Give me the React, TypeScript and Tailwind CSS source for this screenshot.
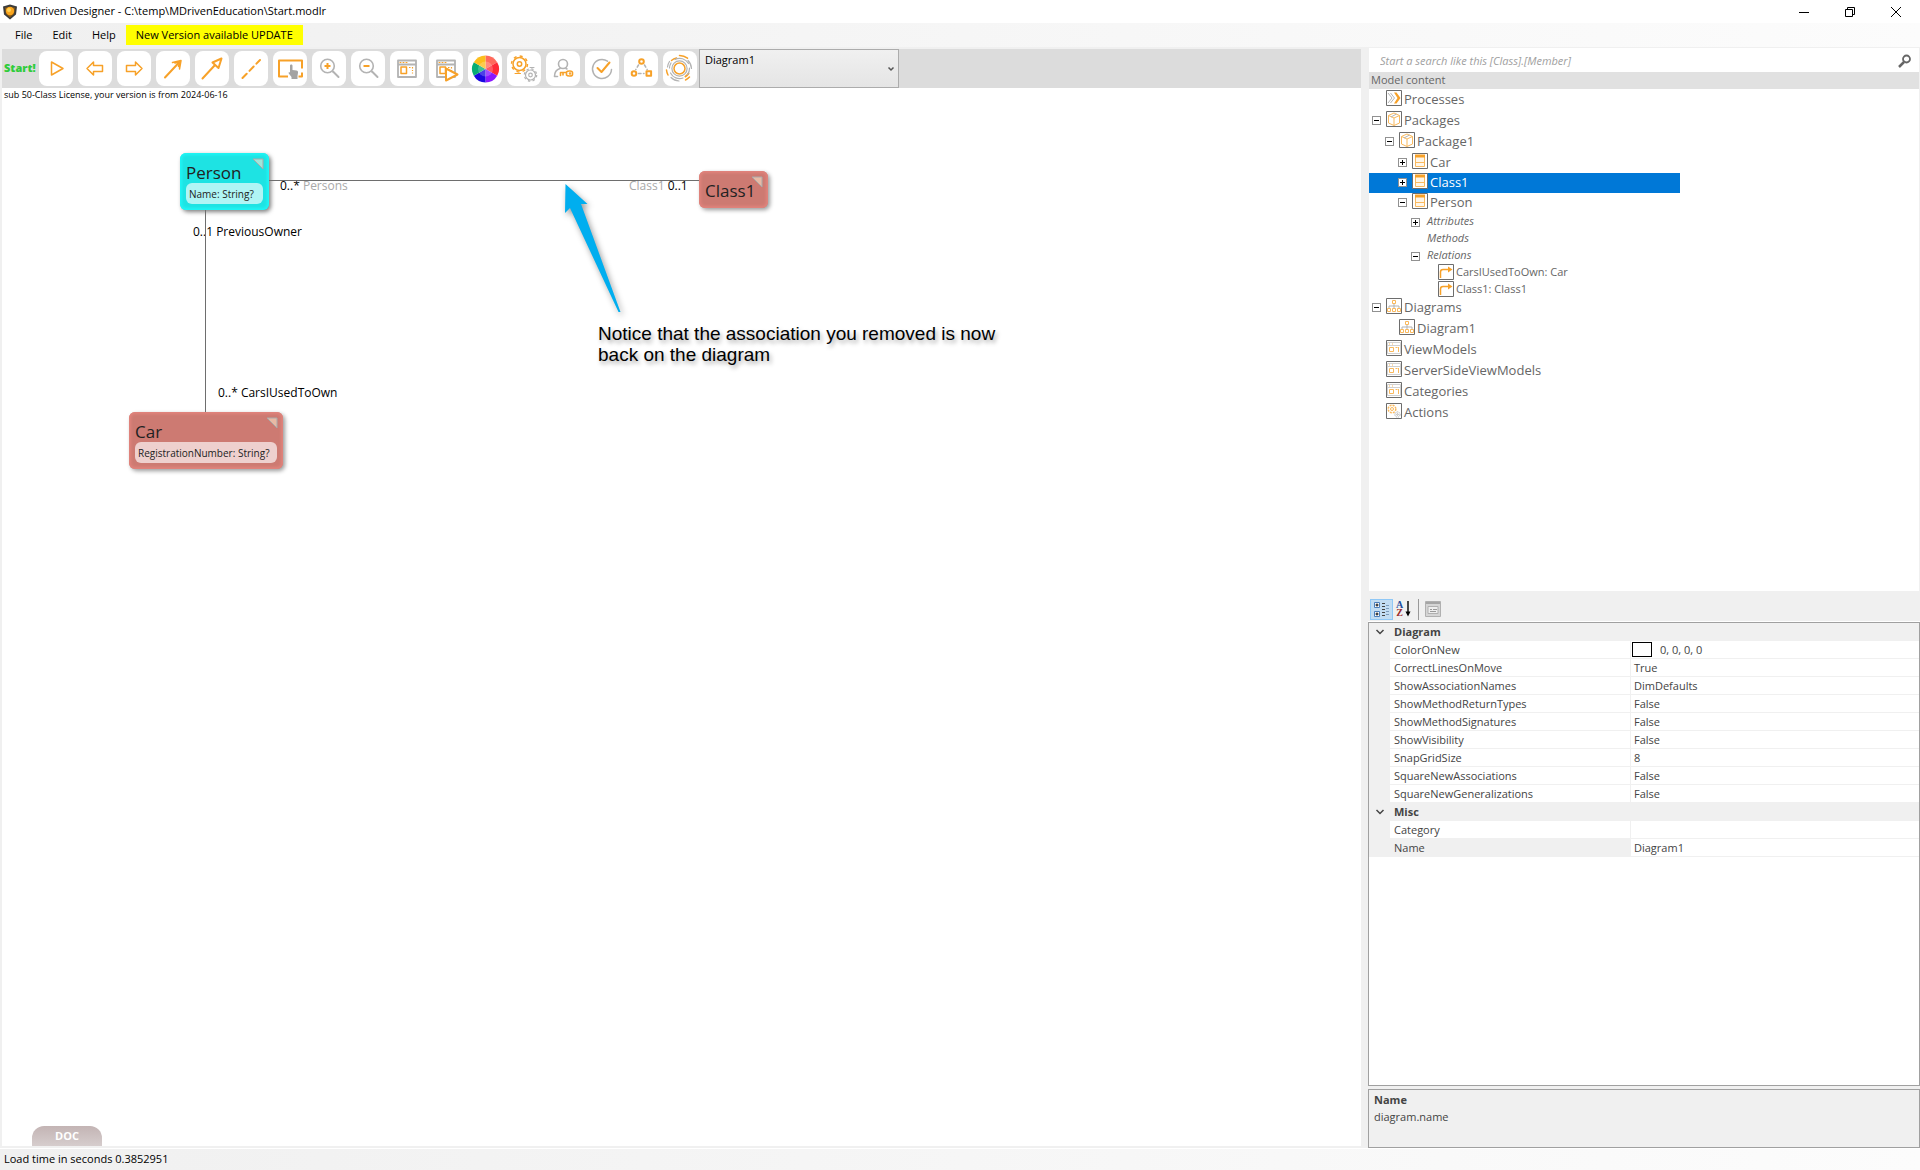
import type { ReactNode } from "react";
import clsx from "clsx";

const ORANGE = "#f7a128";
const GRAY = "#b3b3b3";

export default function App() {
  return (
    <div className="flex h-screen w-full flex-col overflow-hidden bg-white font-['Open_Sans',sans-serif] text-xs text-black">
      <TitleBar />
      <MenuBar />
      <div className="flex min-h-0 flex-1 gap-2 border-b border-white bg-[#f0f0f0] pt-px pr-px pl-0.5">
        <main className="flex min-w-0 flex-1 flex-col pt-px pb-0.5">
          <Toolbar />
          <DiagramCanvas />
        </main>
        <aside className="flex w-[550px] flex-none flex-col">
          <SearchBox />
          <ModelTree />
          <PropertyPanel />
        </aside>
      </div>
      <footer className="flex h-[21px] flex-none items-center bg-linear-to-r from-[#f0f0f0] to-[#fcfcfc] px-1 text-[11px]">
        Load time in seconds 0.3852951
      </footer>
    </div>
  );
}

function TitleBar() {
  return (
    <header className="flex h-[23px] flex-none items-center justify-between pr-[17px] pl-0.5">
      <div className="flex items-center gap-[5px] text-[11px]">
        <svg viewBox="0 0 16 16" className="h-4 w-4" aria-hidden>
          <path d="M1 2.5 8 .5l7 2-1 8L8 15.5 2 10.5Z" fill="#3b3b3b" />
          <path d="M3 3.5h10l-1 6.5-4 3.5-4-3.5Z" fill="#8a5a14" />
          <circle cx="8" cy="7" r="4.2" fill="#f9a51e" />
          <circle cx="7" cy="6" r="2" fill="#ffd257" />
        </svg>
        <h1>MDriven Designer - C:\temp\MDrivenEducation\Start.modlr</h1>
      </div>
      <div className="flex gap-8">
        <WindowButton label="Minimize">
          <path d="M1 7.5h10" />
        </WindowButton>
        <WindowButton label="Restore">
          <path d="M1.5 4.5h7v7h-7zM3.5 4.5v-2h7v7h-2" />
        </WindowButton>
        <WindowButton label="Close">
          <path d="m1 2 10 10M11 2 1 12" />
        </WindowButton>
      </div>
    </header>
  );
}

function WindowButton({ label, children }: { label: string; children: ReactNode }) {
  return (
    <button aria-label={label} className="flex w-3.5 items-center justify-center">
      <svg viewBox="0 0 12 14" className="h-3.5 w-3" fill="none" stroke="#000">
        {children}
      </svg>
    </button>
  );
}

function MenuBar() {
  return (
    <nav className="flex h-6 flex-none items-center bg-linear-to-r from-[#f0f0f0] to-[#fcfcfc] pl-[5px] text-[11px]">
      <button className="px-2.5">File</button>
      <button className="px-2.5">Edit</button>
      <button className="px-2.5">Help</button>
      <button className="h-5 bg-[#ffff00] px-2.5">New Version available UPDATE</button>
    </nav>
  );
}

/* ---------- toolbar ---------- */

const tools: { label: string; icon: ReactNode }[] = [
  { label: "Run", icon: <path d="M12.5 11v13l11.5-6.5Z" /> },
  { label: "Back", icon: <path d="m9 17.5 6.5-6.5v3.5h9v6h-9V24Z" /> },
  { label: "Forward", icon: <path d="m25 17.5-6.5-6.5v3.5h-9v6h9V24Z" /> },
  {
    label: "Association",
    icon: (
      <>
        <path d="M9 26.5 23 11.5" strokeWidth={2} />
        <path d="m16.5 11.5 8.500-2-1.500 8.500M19 12l4.500-1-1 4.500" />
      </>
    ),
  },
  {
    label: "Generalization",
    icon: <path d="M7.5 27.5 20 14M26.5 7.5l-9 4 6 5.500Z" strokeWidth={2} />,
  },
  { label: "Dependency", icon: <path d="M8.5 27 26 9" strokeWidth={2} strokeDasharray="6 4" /> },
  {
    label: "Select area",
    icon: (
      <>
        <path d="M15 25.500H6v-16h23v8" strokeWidth={2} strokeLinecap="butt" />
        <path d="M25.500 25.500H29v-4" strokeWidth={2} strokeLinecap="butt" />
        <path
          d="M17 14.500c0-1.500 2.500-1.500 2.500 0V19l4 .5c1.200.2 1.700 1 1.500 2.200L24.500 25v3h-6v-2l-2.700-3.500c-.6-1 .3-1.700 1.200-1Z"
          fill="#a3a3a3"
          stroke="none"
        />
      </>
    ),
  },
  { label: "Zoom in", icon: <Magnifier plus /> },
  { label: "Zoom out", icon: <Magnifier /> },
  { label: "View models", icon: <FormWindow /> },
  {
    label: "Run view model",
    icon: (
      <>
        <FormWindow />
        <path d="M17 17.5v12l11.500-6Z" fill="#fff" strokeWidth={2} />
      </>
    ),
  },
  { label: "Colors", icon: <ColorWheel /> },
  {
    label: "Settings",
    icon: (
      <>
        <circle cx="12.5" cy="13" r="6.5" />
        <circle cx="12.5" cy="13" r="8" strokeWidth={1.4} strokeDasharray="3 3.28" strokeLinecap="butt" />
        <circle cx="12.5" cy="13" r="2.2" />
        <path d="M8 22.5h5.500" strokeWidth={1} />
        <g stroke={GRAY} strokeWidth={1.2}>
          <circle cx="23.5" cy="24" r="5" />
          <circle cx="23.5" cy="24" r="6.2" strokeDasharray="2.4 2.47" strokeLinecap="butt" />
          <circle cx="23.5" cy="24" r="1.8" />
          <path d="M23 16.5h4" strokeWidth={1} />
        </g>
      </>
    ),
  },
  {
    label: "Access rights",
    icon: (
      <>
        <g stroke={GRAY} strokeWidth={1.6}>
          <circle cx="17" cy="13" r="4.5" />
          <path d="M14 17.5c-3.500 1-5.500 3.500-5.500 8h3M20 17.5l1 .5" />
        </g>
        <path d="M20.5 21.5h-6v3M17 22v2M20.5 21c1-1.500 6-1.500 6 .5v2c0 2-5 2-6 .5Z" strokeWidth={1.6} />
        <circle cx="24" cy="22.5" r=".5" />
      </>
    ),
  },
  {
    label: "Validate",
    icon: (
      <>
        <path d="M22.5 10.200A9.500 9.500 0 1 0 26.500 18.500" stroke={GRAY} />
        <path d="m12.5 17 4 4 8-9.500" strokeWidth={2} />
      </>
    ),
  },
  {
    label: "Auto layout",
    icon: (
      <>
        <g strokeWidth={2}>
          <circle cx="17.5" cy="10.5" r="2.3" />
          <circle cx="10" cy="22.5" r="2.3" />
          <path d="M22.5 20.200h4.600v4.600h-4.600Z" />
        </g>
        <path d="m14.5 14-2.700 4.500M20.5 14l2.700 4.500M14.5 22.500H20" stroke={GRAY} strokeDasharray="2.5 2.5" />
      </>
    ),
  },
  {
    label: "Rings",
    icon: (
      <>
        <circle cx="16.5" cy="17.5" r="5.5" />
        <path d="M16.5 4.500a13 13 0 0 1 8 2.700M5 24a13 13 0 0 1-1.500-5M26.500 26a13 13 0 0 1-4 3M8.500 9.500a11 11 0 0 1 5-2.500" />
        <path d="M25.5 22.500a10.500 10.500 0 0 1-3 3" strokeWidth={2} />
        <g stroke={GRAY} strokeWidth={1.2}>
          <circle cx="16.5" cy="17.5" r="7.6" />
          <path d="M12 8.500a10 10 0 0 1 13.500 4M26.500 17a10 10 0 0 1-2 6.500M20 27a10 10 0 0 1-12.500-5M6.500 17a10 10 0 0 1 1.500-5M25 9.500a12 12 0 0 1 3.500 8M16 30a12 12 0 0 1-8-3.500M4.500 16a12 12 0 0 1 2-5.500" />
        </g>
      </>
    ),
  },
];

function Magnifier({ plus }: { plus?: boolean }) {
  return (
    <>
      <circle cx="15.5" cy="15" r="6.8" stroke={GRAY} strokeWidth={1.6} />
      <path d="m21 20.500 5.500 5.500" stroke={GRAY} strokeWidth={2} />
      <path d={plus ? "M12.5 15h6M15.5 12v6" : "M12.5 15h6"} strokeWidth={2} strokeLinecap="butt" />
    </>
  );
}

function FormWindow() {
  return (
    <>
      <path d="M8 9.500h18V26H8ZM8 13.500h18" stroke={GRAY} strokeWidth={1.8} />
      <path d="M10 11.500h1M13 11.500h1M16 11.500h1" strokeWidth={1} />
      <path d="M11 16h5.500v6.500H11Z" />
      <path d="M19 16.500h1.500M22.500 16v1.500M22.500 19v1M22.500 21.500v1" strokeWidth={1.2} strokeLinecap="butt" />
    </>
  );
}

function ColorWheel() {
  return (
    <g stroke="none">
      <path d="M17.5 18V4.500a13.500 13.500 0 0 1 11.700 6.750Z" fill="#ff6a5c" />
      <path d="m17.5 18 11.700-6.750a13.500 13.500 0 0 1 0 13.500Z" fill="#ff2b36" />
      <path d="m17.5 18 11.700 6.750a13.500 13.500 0 0 1-11.700 6.750Z" fill="#8a17ff" />
      <path d="M17.5 18v13.500a13.500 13.500 0 0 1-11.700-6.750Z" fill="#1a08e0" />
      <path d="m17.5 18-11.700 6.750a13.500 13.500 0 0 1 0-13.500Z" fill="#07ad74" />
      <path d="M17.5 18 5.800 11.250A13.500 13.500 0 0 1 17.500 4.500Z" fill="#fcbe1c" />
      <circle cx="17.5" cy="18" r="7.5" fill="#fff" fillOpacity=".22" />
    </g>
  );
}

function Toolbar() {
  return (
    <div className="flex h-[39px] flex-none items-center bg-[#dcdcdc]">
      <button className="w-[37px] flex-none pl-0.5 text-left text-[11px] font-extrabold text-[#2fcc3a]">Start!</button>
      <div className="flex gap-[5px]">
        {tools.map((tool) => (
          <button key={tool.label} aria-label={tool.label} className="h-[35px] w-[34px] flex-none rounded-lg bg-white">
            <svg
              viewBox="0 0 34 35"
              className="h-[35px] w-[34px]"
              fill="none"
              stroke={ORANGE}
              strokeWidth={1.5}
              strokeLinecap="round"
              strokeLinejoin="round"
            >
              {tool.icon}
            </svg>
          </button>
        ))}
      </div>
      <div className="relative ml-0.5 h-full w-[200px]">
        <select
          aria-label="Diagram"
          className="h-full w-full appearance-none border border-[#acacac] bg-linear-to-b from-[#f0f0f0] to-[#e5e5e5] px-[5px] pb-4 text-[11px]"
        >
          <option>Diagram1</option>
        </select>
        <svg
          viewBox="0 0 8 8"
          className="pointer-events-none absolute top-4 right-1 h-2 w-2"
          fill="none"
          stroke="#555"
          strokeWidth={1.5}
        >
          <path d="m1.5 2.500 2.500 2.500 2.500-2.500" />
        </svg>
      </div>
    </div>
  );
}

/* ---------- diagram ---------- */

function DiagramCanvas() {
  return (
    <section className="relative min-h-0 flex-1 overflow-hidden bg-white">
      <p className="px-0.5 text-[9px] leading-[14px]">sub 50-Class License, your version is from 2024-06-16</p>

      <ClassNode name="Person" attribute="Name: String?" color="cyan" className="top-[65px] left-[178px] h-[57px] w-[89px]" />
      <ClassNode name="Class1" color="red" className="top-[83px] left-[697px] h-[37px] w-[69px]" />
      <ClassNode
        name="Car"
        attribute="RegistrationNumber: String?"
        color="red"
        className="top-[324px] left-[127px] h-[57px] w-[154px]"
      />

      <RoleLabel className="top-[90px] left-[278px]">
        0..* <span className="text-[#a9a9a9]">Persons</span>
      </RoleLabel>
      <RoleLabel className="top-[90px] left-[627px]">
        <span className="text-[#a9a9a9]">Class1</span> 0..1
      </RoleLabel>
      <RoleLabel className="top-[136px] left-[191px]">0..1 PreviousOwner</RoleLabel>
      <RoleLabel className="top-[297px] left-[216px]">0..* CarsIUsedToOwn</RoleLabel>

      {/* association lines and the callout arrow */}
      <svg viewBox="0 0 800 400" className="pointer-events-none absolute top-0 left-0 h-[400px] w-[800px]" fill="none">
        <path d="M267 92.500h430M203.500 122v202" stroke="#6e6e6e" />
        <path
          d="m563.5 96 22 20H579L618.500 224h-2L568 120l-5 5Z"
          fill="#00aeef"
          className="drop-shadow-[2px_3px_3px_rgba(0,0,0,0.4)]"
        />
      </svg>
      <p className="absolute top-[235px] left-[596px] w-[420px] font-['Liberation_Sans',sans-serif] text-[19px] leading-[21px] text-shadow-[2px_3px_4px_rgba(0,0,0,0.35)]">
        Notice that the association you removed is now back on the diagram
      </p>

      <button className="absolute bottom-0 left-[30px] h-5 w-[70px] rounded-t-xl bg-linear-to-b from-[#c3b4b4] to-[#d6cdcd] text-[11px] font-bold text-white">
        DOC
      </button>
    </section>
  );
}

function RoleLabel({ className, children }: { className: string; children: ReactNode }) {
  return <span className={clsx("absolute leading-4 whitespace-nowrap", className)}>{children}</span>;
}

type ClassNodeProps = { name: string; attribute?: string; color: "cyan" | "red"; className: string };

function ClassNode({ name, attribute, color, className }: ClassNodeProps) {
  return (
    <div
      className={clsx(
        "absolute flex flex-col rounded-md px-1.5 pt-[9px]",
        color === "cyan"
          ? "bg-[#1ee3e3] shadow-[inset_0_0_3px_2px_#1ff6f6,2px_2px_4px_rgba(0,0,0,0.5)]"
          : "bg-[#cd7a72] shadow-[inset_0_0_3px_2px_#e2847c,2px_2px_4px_rgba(0,0,0,0.4)]",
        className,
      )}
    >
      <h2 className="text-[17px] leading-[21px] text-[#222]">{name}</h2>
      {attribute && (
        <p className="h-[21px] rounded-md bg-white/65 px-[3px] text-[10px] leading-[22px] whitespace-nowrap text-[#222]">
          {attribute}
        </p>
      )}
      <svg viewBox="0 0 12 12" className="absolute top-[5px] right-[5px] h-3 w-3" aria-hidden>
        <path d="M1 1h10v10Z" fill={color === "cyan" ? "#9fe6da" : "#e8b9a4"} stroke="#a9a9a9" />
      </svg>
    </div>
  );
}

/* ---------- model tree ---------- */

function SearchBox() {
  return (
    <label className="flex h-6 flex-none items-center bg-white pt-0.5 pr-[7px] pl-[11px]">
      <input
        aria-label="Search"
        placeholder="Start a search like this [Class].[Member]"
        className="min-w-0 flex-1 text-[11px] italic outline-none placeholder:text-[#a0a0a0]"
      />
      <svg viewBox="0 0 14 14" className="h-3.5 w-3.5" fill="none" stroke="#666">
        <circle cx="8.5" cy="5" r="3.5" strokeWidth={1.8} />
        <path d="m6 8-5 5" strokeWidth={2.5} />
      </svg>
    </label>
  );
}

type TreeIconName = "process" | "package" | "class" | "relation" | "diagram" | "form" | "gears";

type TreeRow = { text: string; level: number; icon?: TreeIconName; open?: boolean; selected?: boolean };

const treeRows: TreeRow[] = [
  { text: "Processes", level: 0, icon: "process" },
  { text: "Packages", level: 0, icon: "package", open: true },
  { text: "Package1", level: 1, icon: "package", open: true },
  { text: "Car", level: 2, icon: "class", open: false },
  { text: "Class1", level: 2, icon: "class", open: false, selected: true },
  { text: "Person", level: 2, icon: "class", open: true },
  { text: "Attributes", level: 3, open: false },
  { text: "Methods", level: 3 },
  { text: "Relations", level: 3, open: true },
  { text: "CarsIUsedToOwn: Car", level: 4, icon: "relation" },
  { text: "Class1: Class1", level: 4, icon: "relation" },
  { text: "Diagrams", level: 0, icon: "diagram", open: true },
  { text: "Diagram1", level: 1, icon: "diagram" },
  { text: "ViewModels", level: 0, icon: "form" },
  { text: "ServerSideViewModels", level: 0, icon: "form" },
  { text: "Categories", level: 0, icon: "form" },
  { text: "Actions", level: 0, icon: "gears" },
];

const rowStyles = [
  "h-[21px] pl-[3px] text-[13px] leading-[18px]",
  "h-[21px] pl-4 text-[13px] leading-[18px]",
  "h-5 pl-[29px] text-[13px] leading-[18px]",
  "h-[17px] pl-[42px] text-[11px] leading-4 italic",
  "h-[17px] pl-[55px] text-[11px] leading-4",
];

function ModelTree() {
  return (
    <section className="flex min-h-0 flex-1 flex-col bg-white text-[#666]">
      <h2 className="h-[17px] flex-none bg-[#e1e1e1] px-0.5 text-[11px] leading-4">Model content</h2>
      <ul className="w-[311px] pt-px">
        {treeRows.map((row, i) => (
          <li key={i} className={clsx("flex items-start", rowStyles[row.level], row.selected && "bg-[#0078d7] text-white")}>
            <Expander open={row.open} />
            {row.icon ? <TreeIcon name={row.icon} /> : <span className="w-[7px]" />}
            <span>{row.text}</span>
          </li>
        ))}
      </ul>
    </section>
  );
}

function Expander({ open }: { open?: boolean }) {
  if (open === undefined) return <span className="w-[9px] flex-none" />;
  return (
    <button aria-label={open ? "Collapse" : "Expand"} className="mt-[5px] h-[9px] w-[9px] flex-none">
      <svg viewBox="0 0 9 9" className="h-[9px] w-[9px]" fill="none" shapeRendering="crispEdges">
        <path d="M.5.5h8v8h-8Z" fill="#fff" stroke="#919191" />
        <path d={open ? "M2 4.500h5" : "M2 4.500h5M4.500 2v5"} stroke="#000" />
      </svg>
    </button>
  );
}

const treeIcons: Record<TreeIconName, ReactNode> = {
  process: (
    <>
      <path d="m2 3 4 5-4 5M4.500 3l4 5-4 5" stroke={GRAY} />
      <path d="M8 2.500h2.500L14.500 8l-4 5.500H8L11.500 8Z" fill={ORANGE} stroke="none" />
    </>
  ),
  package: (
    <>
      <path d="m8 14.500-5.500-2.500V4.500L8 2l5.500 2.500V12ZM2.500 4.500 8 7l5.500-2.500M8 7v7.500" stroke="#f9b95e" />
      <path d="m5 6 5.500-3" stroke={GRAY} />
    </>
  ),
  class: (
    <>
      <path d="M3.500 3v10.500h9V3" fill="#fff6e8" stroke="#f9b95e" />
      <path d="M3 1.500h10v3H3Z" fill={ORANGE} stroke="none" />
      <path d="M3 9.500h10" stroke="#f9b95e" />
    </>
  ),
  relation: (
    <>
      <path d="M2.500 14V8q0-2.500 2.500-2.500h6" strokeWidth={1.5} />
      <path d="m10 2.500 4.500 3-4.500 3Z" fill={ORANGE} stroke="none" />
    </>
  ),
  diagram: (
    <>
      <path d="M6.500 2.500h3v3h-3ZM1.500 10.500h3v3h-3ZM6.500 10.500h3v3h-3ZM11.500 10.500h3v3h-3Z" stroke="#f9b95e" />
      <path d="M8 6v4M3 10V8h10v2" stroke={GRAY} />
    </>
  ),
  form: (
    <>
      <path d="M1.500 2.500h13v11h-13ZM2 5.500h12" stroke="#d0d0d0" />
      <path d="M3.500 7.500h4v4h-4ZM9.500 7.500h2M12.500 7v5M3 4h1M6 4h1" stroke="#f9b95e" />
    </>
  ),
  gears: (
    <>
      <circle cx="6" cy="6" r="3.8" stroke="#f9b95e" strokeDasharray="2 1" strokeWidth={1.5} />
      <circle cx="6" cy="6" r="1.5" stroke="#f9b95e" />
      <circle cx="11.5" cy="11.5" r="2.6" stroke={GRAY} strokeDasharray="1.5 .7" />
      <circle cx="11.5" cy="11.5" r=".8" stroke={GRAY} />
    </>
  ),
};

function TreeIcon({ name }: { name: TreeIconName }) {
  return (
    <svg viewBox="0 0 16 16" className="mr-0.5 ml-[5px] h-4 w-4 flex-none" fill="none" stroke={ORANGE}>
      <path d="M.5.5h15v15H.5Z" fill="#fff" stroke="#6d6d6d" />
      {treeIcons[name]}
    </svg>
  );
}

/* ---------- property grid ---------- */

const propertyGroups = [
  {
    name: "Diagram",
    rows: [
      ["ColorOnNew", "0, 0, 0, 0"],
      ["CorrectLinesOnMove", "True"],
      ["ShowAssociationNames", "DimDefaults"],
      ["ShowMethodReturnTypes", "False"],
      ["ShowMethodSignatures", "False"],
      ["ShowVisibility", "False"],
      ["SnapGridSize", "8"],
      ["SquareNewAssociations", "False"],
      ["SquareNewGeneralizations", "False"],
    ],
  },
  {
    name: "Misc",
    rows: [
      ["Category", ""],
      ["Name", "Diagram1"],
    ],
  },
];

function PropertyPanel() {
  return (
    <section className="-mr-px -ml-px flex h-[557px] flex-none flex-col text-[11px] text-[#444]">
      <PropertyToolbar />
      <div className="min-h-0 flex-1 border border-[#a0a0a0] bg-white">
        <table className="w-full table-fixed border-separate border-spacing-0">
          <colgroup>
            <col className="w-[21px]" />
            <col className="w-[241px]" />
            <col />
          </colgroup>
          {propertyGroups.map((group) => (
            <tbody key={group.name}>
              <tr className="h-[18px] bg-[#f0f0f0]">
                <td className="p-0">
                  <button aria-label={"Collapse " + group.name} className="flex h-[18px] w-full items-center justify-center">
                    <svg viewBox="0 0 10 10" className="h-2.5 w-2.5" fill="none" stroke="#444" strokeWidth={1.5}>
                      <path d="m1.5 3 3.500 3.500L8.500 3" />
                    </svg>
                  </button>
                </td>
                <th colSpan={2} className="p-0 pl-1 text-left leading-[18px] font-bold">
                  {group.name}
                </th>
              </tr>
              {group.rows.map(([name, value]) => (
                <tr key={name} className="h-[18px]">
                  <td className="bg-[#f0f0f0] p-0" />
                  <th
                    className={clsx(
                      "border-r border-b border-[#f0f0f0] p-0 pl-1 text-left leading-[17px] font-normal",
                      name === "Name" && "bg-[#f0f0f0]",
                    )}
                  >
                    {name}
                  </th>
                  <td className="border-b border-[#f0f0f0] p-0 pl-[3px] leading-[17px]">
                    {name === "ColorOnNew" ? (
                      <span className="-ml-0.5 flex items-center gap-2">
                        <span className="h-[15px] w-5 border border-black bg-white" />
                        {value}
                      </span>
                    ) : (
                      value
                    )}
                  </td>
                </tr>
              ))}
            </tbody>
          ))}
        </table>
      </div>
      <div className="mt-[3px] h-[59px] flex-none border border-[#a0a0a0] bg-[#f0f0f0] px-[5px] pt-px leading-[17px]">
        <h3 className="font-bold">Name</h3>
        <p>diagram.name</p>
      </div>
    </section>
  );
}

function PropertyToolbar() {
  return (
    <div className="flex h-[31px] flex-none items-center border-b border-white pt-1.5 pl-0.5">
      <button aria-label="Categorized" className="flex h-[21px] w-[23px] items-center justify-center border border-[#90c8f6] bg-[#c2ddf3]">
        <svg viewBox="0 0 17 17" className="h-[17px] w-[17px]" fill="none">
          <path d="M1.500 1.500h5v5h-5ZM1.500 10.500h5v5h-5Z" fill="#fff" stroke="#4a7ebb" />
          <path d="M2.500 4h3M4 2.500v3M2.500 13h3M4 11.500v3" stroke="#000" />
          <path d="M9 2.500h3M9 5.500h3M9 8.500h3M9 11.500h3M9 14.500h3" stroke="#444" />
          <path d="M13 4.500h3M13 7.500h3M13 10.500h3M13 13.500h3" stroke="#7d9cbd" />
        </svg>
      </button>
      <button aria-label="Alphabetical" className="ml-[3px] flex items-center gap-0.5 text-[10px] leading-2 font-bold">
        <span className="flex flex-col font-['Liberation_Serif',serif]">
          <span className="text-[#1f4e9e]">A</span>
          <span className="text-[#9c2b2b]">Z</span>
        </span>
        <svg viewBox="0 0 6 16" className="h-4 w-1.5" fill="#000">
          <path d="M2.300 0h1.400v10.500H5.500L3 15.500.5 10.500h1.800Z" />
        </svg>
      </button>
      <span className="ml-[7px] h-[21px] w-px bg-[#999]" />
      <button aria-label="Property pages" className="ml-1.5">
        <svg viewBox="0 0 16 16" className="h-4 w-4" fill="none" stroke="#b0b0b0">
          <path d="M.5.5h15v15H.5Z" fill="#d5d5d5" />
          <path d="M1 2h14" stroke="#a5a5a5" strokeWidth={2} />
          <path d="M3 5.500h10v7H3Z" fill="#eee" />
          <path d="M5 8.500h2M8 8.500h4M5 10.500h6" stroke="#999" />
        </svg>
      </button>
    </div>
  );
}
